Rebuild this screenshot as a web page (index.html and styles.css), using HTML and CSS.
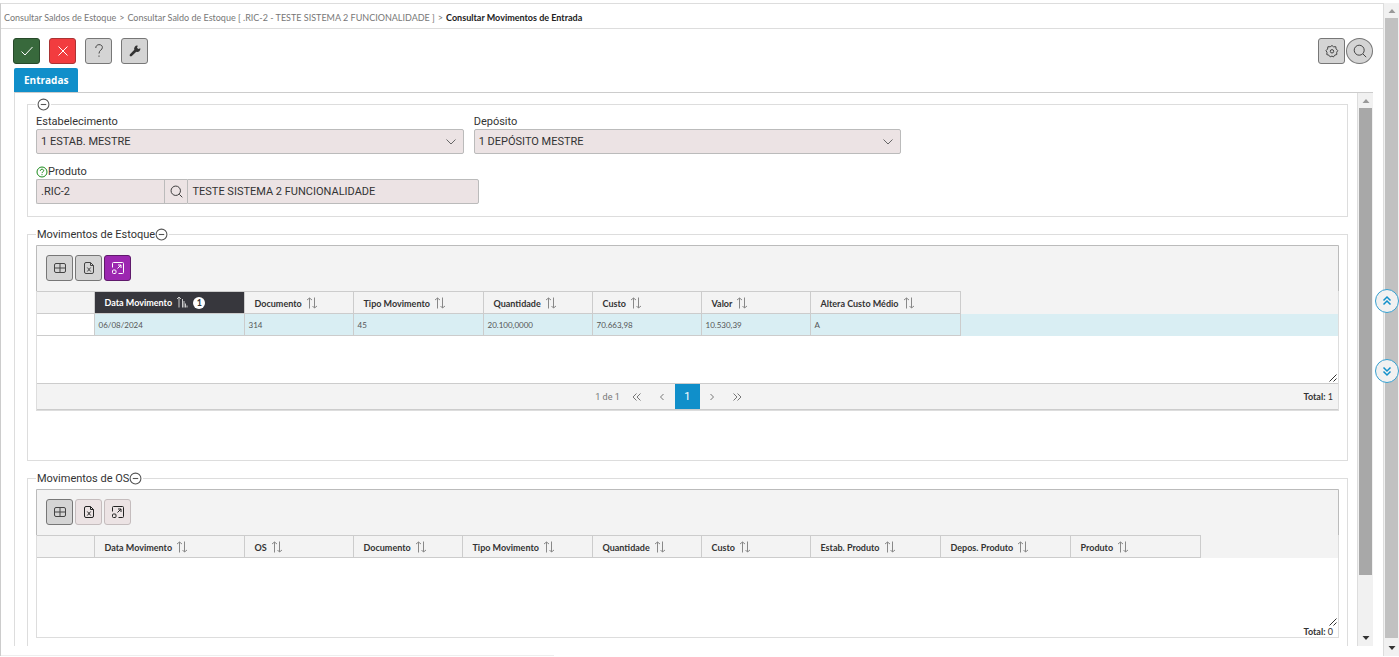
FILE: index.html
```html
<!DOCTYPE html>
<html lang="pt-BR">
<head>
    <meta charset="UTF-8">
    <meta name="viewport" content="width=device-width, initial-scale=1.0">
    <title>Consultar Movimentos de Entrada</title>
    <link rel="stylesheet" href="styles.css">
</head>
<body>
    <svg class="sprite" aria-hidden="true">
        <symbol id="minus" viewBox="0 0 12 12"><circle cx="6" cy="6" r="5"/><path d="M3.5 6h5"/></symbol>
        <symbol id="help-circle" viewBox="0 0 12 12"><circle cx="6" cy="6" r="5"/><path d="M4.3 4.8c0-2.2 3.4-2.1 3.4-.1C7.700 5.800 6 5.900 6 7.100M6 8.200v1"/></symbol>
        <symbol id="check" viewBox="0 0 16 16"><path d="M2.500 8.500l3.500 3.500 7.500-8"/></symbol>
        <symbol id="close" viewBox="0 0 16 16"><path d="M3.500 3.500l9 9M12.500 3.500l-9 9"/></symbol>
        <symbol id="question" viewBox="0 0 16 16"><path d="M4.800 5c0-4.600 6.600-4.200 6.600-.6C11.400 7 8 7.200 8 10.500M8 12.500v1.300"/></symbol>
        <symbol id="wrench" viewBox="0 0 16 16"><path d="M13.300 5.200l-2 .8-1.300-1.300.8-2a3 3 0 0 0-3.500 4L3 11.200a1.200 1.200 0 0 0 1.800 1.800l4.500-4.300a3 3 0 0 0 4-3.500z"/></symbol>
        <symbol id="gear" viewBox="0 0 16 16"><path d="M8 2.500l1.500 1.300 2.300-.1.300 2.200 1.600 1.600-1 1.900.1 2.100-2.100.7L9.400 14 8 13l-1.800.9-1.300-1.700-2.100-.6.200-2.200-1-1.800 1.600-1.600.3-2.300 2.300.1z"/><circle cx="8" cy="8.300" r="1.700"/></symbol>
        <symbol id="search" viewBox="0 0 16 16"><circle cx="7.200" cy="7.200" r="5"/><path d="M11 11l3.200 3.200"/></symbol>
        <symbol id="chevron" viewBox="0 0 12 12"><path d="M1.500 3.500L6 8l4.500-4.500"/></symbol>
        <symbol id="grid" viewBox="0 0 16 16"><rect x="2.500" y="3.500" width="11" height="9" rx="1.500"/><path d="M8 3.500v9M2.500 8h11"/></symbol>
        <symbol id="excel" viewBox="0 0 16 16"><path d="M9.500 2.500H5A1.500 1.500 0 0 0 3.500 4v8A1.500 1.500 0 0 0 5 13.500h6a1.500 1.500 0 0 0 1.500-1.500V5.500zM9.500 2.500v3h3M6.300 7.500l3.400 4M9.700 7.500l-3.400 4"/></symbol>
        <symbol id="expand" viewBox="0 0 16 16"><path d="M2.500 7.500v-4a1 1 0 0 1 1-1h9a1 1 0 0 1 1 1v9a1 1 0 0 1-1 1h-4M7.500 8.500l3.500-3.500M8 5h3v3"/><rect x="2.500" y="10" width="3.500" height="3.500" rx="1"/></symbol>
        <symbol id="sort" viewBox="0 0 12 12"><path d="M3.500 11.500V1M1 3l2.500-2L6 3M8.500.5V11M6.500 9l2 2 2.500-2"/></symbol>
        <symbol id="sorted" viewBox="0 0 12 12"><path d="M3 11.500V1M1 3l2-2 2 2M6.500 3v8.500M8 5v6.500M9.500 7.500v4M11 9.500v2"/></symbol>
        <symbol id="double" viewBox="0 0 12 12"><path d="M5.500 2.500L2 6l3.500 3.500M9.500 2.500L6 6l3.500 3.500"/></symbol>
        <symbol id="single" viewBox="0 0 12 12"><path d="M7.500 3L4.500 6l3 3"/></symbol>
        <symbol id="triangle" viewBox="0 0 12 12"><path d="M2.500 8L6 4l3.500 4z"/></symbol>
        <symbol id="grip" viewBox="0 0 10 10"><path d="M1.500 8.500l7-7M5.500 8.500l3-3"/></symbol>
    </svg>

    <div class="page">
        <header class="breadcrumb">
            <a href="#">Consultar Saldos de Estoque</a>
            <span>&gt;</span>
            <a href="#">Consultar Saldo de Estoque [ .RIC-2 - TESTE SISTEMA 2 FUNCIONALIDADE ]</a>
            <span>&gt;</span>
            <strong>Consultar Movimentos de Entrada</strong>
        </header>

        <main>
            <div class="actions">
                <button type="button" class="btn confirm" aria-label="Confirmar"><svg><use href="#check"/></svg></button>
                <button type="button" class="btn cancel" aria-label="Cancelar"><svg><use href="#close"/></svg></button>
                <button type="button" class="btn" aria-label="Ajuda"><svg><use href="#question"/></svg></button>
                <button type="button" class="btn solid" aria-label="Ferramentas"><svg><use href="#wrench"/></svg></button>
                <div class="actions-right">
                    <button type="button" class="btn" aria-label="Configurar"><svg><use href="#gear"/></svg></button>
                    <button type="button" class="btn round" aria-label="Pesquisar"><svg><use href="#search"/></svg></button>
                </div>
            </div>

            <nav class="tabs">
                <button type="button" class="tab">Entradas</button>
            </nav>

            <div class="panel">
                <div class="panel-content">
                    <fieldset class="filters">
                        <legend><button type="button" class="toggle" aria-label="Recolher filtros"><svg><use href="#minus"/></svg></button></legend>
                        <div class="form-row">
                            <div class="field">
                                <label for="estabelecimento">Estabelecimento</label>
                                <div class="select-box">
                                    <select id="estabelecimento"><option>1 ESTAB. MESTRE</option></select>
                                    <svg><use href="#chevron"/></svg>
                                </div>
                            </div>
                            <div class="field">
                                <label for="deposito">Depósito</label>
                                <div class="select-box">
                                    <select id="deposito"><option>1 DEPÓSITO MESTRE</option></select>
                                    <svg><use href="#chevron"/></svg>
                                </div>
                            </div>
                        </div>
                        <div class="field">
                            <label for="produto"><svg class="help"><use href="#help-circle"/></svg>Produto</label>
                            <div class="lookup">
                                <input type="text" id="produto" class="code" value=".RIC-2" readonly>
                                <button type="button" class="lookup-btn" aria-label="Buscar produto"><svg><use href="#search"/></svg></button>
                                <input type="text" class="description" aria-label="Descrição do produto" value="TESTE SISTEMA 2 FUNCIONALIDADE" readonly>
                            </div>
                        </div>
                    </fieldset>

                    <fieldset class="stock">
                        <legend>Movimentos de Estoque<button type="button" class="toggle" aria-label="Recolher movimentos de estoque"><svg><use href="#minus"/></svg></button></legend>
                        <div class="grid-box">
                            <div class="grid-toolbar">
                                <button type="button" class="btn" aria-label="Colunas"><svg><use href="#grid"/></svg></button>
                                <button type="button" class="btn" aria-label="Exportar para Excel"><svg><use href="#excel"/></svg></button>
                                <button type="button" class="btn purple" aria-label="Expandir"><svg><use href="#expand"/></svg></button>
                            </div>
                            <div class="grid-body">
                                <table>
                                    <colgroup>
                                        <col class="w-select"><col class="w-large"><col class="w-small"><col class="w-medium"><col class="w-small"><col class="w-small"><col class="w-small"><col class="w-large"><col>
                                    </colgroup>
                                    <thead>
                                        <tr>
                                            <th></th>
                                            <th class="sorted">Data Movimento <svg><use href="#sorted"/></svg><span class="order">1</span></th>
                                            <th>Documento <svg><use href="#sort"/></svg></th>
                                            <th>Tipo Movimento <svg><use href="#sort"/></svg></th>
                                            <th>Quantidade <svg><use href="#sort"/></svg></th>
                                            <th>Custo <svg><use href="#sort"/></svg></th>
                                            <th>Valor <svg><use href="#sort"/></svg></th>
                                            <th>Altera Custo Médio <svg><use href="#sort"/></svg></th>
                                            <th class="filler"></th>
                                        </tr>
                                    </thead>
                                    <tbody>
                                        <tr>
                                            <td class="select-cell"></td>
                                            <td>06/08/2024</td>
                                            <td>314</td>
                                            <td>45</td>
                                            <td>20.100,0000</td>
                                            <td>70.663,98</td>
                                            <td>10.530,39</td>
                                            <td>A</td>
                                            <td class="filler"></td>
                                        </tr>
                                    </tbody>
                                </table>
                                <svg class="grip"><use href="#grip"/></svg>
                            </div>
                            <div class="pager">
                                <div class="pages">
                                    <span>1 de 1</span>
                                    <button type="button" aria-label="Primeira página"><svg><use href="#double"/></svg></button>
                                    <button type="button" aria-label="Página anterior"><svg><use href="#single"/></svg></button>
                                    <button type="button" class="current">1</button>
                                    <button type="button" class="next" aria-label="Próxima página"><svg><use href="#single"/></svg></button>
                                    <button type="button" class="next" aria-label="Última página"><svg><use href="#double"/></svg></button>
                                </div>
                                <div class="total"><strong>Total:</strong> 1</div>
                            </div>
                        </div>
                    </fieldset>

                    <fieldset class="orders">
                        <legend>Movimentos de OS<button type="button" class="toggle" aria-label="Recolher movimentos de OS"><svg><use href="#minus"/></svg></button></legend>
                        <div class="grid-box">
                            <div class="grid-toolbar">
                                <button type="button" class="btn" aria-label="Colunas"><svg><use href="#grid"/></svg></button>
                                <button type="button" class="btn pale" aria-label="Exportar para Excel"><svg><use href="#excel"/></svg></button>
                                <button type="button" class="btn pale" aria-label="Expandir"><svg><use href="#expand"/></svg></button>
                            </div>
                            <div class="grid-body">
                                <table>
                                    <colgroup>
                                        <col class="w-select"><col class="w-large"><col class="w-small"><col class="w-small"><col class="w-medium"><col class="w-small"><col class="w-small"><col class="w-medium"><col class="w-medium"><col class="w-medium"><col>
                                    </colgroup>
                                    <thead>
                                        <tr>
                                            <th></th>
                                            <th>Data Movimento <svg><use href="#sort"/></svg></th>
                                            <th>OS <svg><use href="#sort"/></svg></th>
                                            <th>Documento <svg><use href="#sort"/></svg></th>
                                            <th>Tipo Movimento <svg><use href="#sort"/></svg></th>
                                            <th>Quantidade <svg><use href="#sort"/></svg></th>
                                            <th>Custo <svg><use href="#sort"/></svg></th>
                                            <th>Estab. Produto <svg><use href="#sort"/></svg></th>
                                            <th>Depos. Produto <svg><use href="#sort"/></svg></th>
                                            <th>Produto <svg><use href="#sort"/></svg></th>
                                            <th class="filler"></th>
                                        </tr>
                                    </thead>
                                </table>
                                <svg class="grip"><use href="#grip"/></svg>
                            </div>
                            <div class="total"><strong>Total:</strong> 0</div>
                        </div>
                    </fieldset>
                </div>
                <div class="scrollbar inner">
                    <svg><use href="#triangle"/></svg>
                    <div class="thumb"></div>
                    <svg class="down"><use href="#triangle"/></svg>
                </div>
            </div>
        </main>
        <div class="status"></div>
    </div>

    <div class="scrollbar">
        <svg><use href="#triangle"/></svg>
        <div class="thumb"></div>
        <svg class="down"><use href="#triangle"/></svg>
    </div>

    <div class="jump">
        <button type="button" aria-label="Ir para o topo"><svg><use href="#double"/></svg></button>
        <button type="button" class="bottom" aria-label="Ir para o final"><svg><use href="#double"/></svg></button>
    </div>
</body>
</html>
```
FILE: styles.css
```css
* {
    box-sizing: border-box;
}
body {
    margin: 0;
    padding: 3px 0 1px;
    height: 100vh;
    display: flex;
    overflow: hidden;
    font-family: Roboto, sans-serif;
    font-size: 11px;
    color: #333;
    background: white;
}
button, input, select {
    margin: 0;
    font-family: inherit;
    font-size: inherit;
    color: inherit;
}
svg {
    width: 12px;
    height: 12px;
    flex: none;
    fill: none;
    stroke: currentColor;
}
.sprite {
    position: absolute;
    width: 0;
    height: 0;
}
.page {
    flex: 1;
    min-width: 0;
    display: flex;
    flex-direction: column;
    border-top: 1px solid #ddd;
    border-left: 1px solid #ccc;
}
.breadcrumb {
    display: flex;
    align-items: center;
    gap: 3px;
    height: 25px;
    padding: 2px 3px 0;
    border-bottom: 1px solid #ddd;
    font-family: Lato, sans-serif;
    font-size: 9px;
    color: #777;
}
.breadcrumb a {
    color: inherit;
    text-decoration: none;
}
.breadcrumb strong {
    color: #222;
}
main {
    flex: 1;
    min-height: 0;
    display: flex;
    flex-direction: column;
    padding: 9px 10px 0 12px;
}

/* buttons */
.actions {
    display: flex;
    gap: 9px;
}
.actions-right {
    display: flex;
    gap: 1px;
    margin-left: auto;
}
.btn {
    display: flex;
    align-items: center;
    justify-content: center;
    width: 27px;
    height: 26px;
    padding: 0;
    border: 1px solid #777;
    border-radius: 3px;
    background: #d4d4d4;
    color: #444;
}
.btn svg {
    width: 16px;
    height: 16px;
}
.confirm {
    background: #38693c;
    border-color: #27492a;
    color: white;
}
.cancel {
    background: #f23c3f;
    border-color: #a33;
    color: white;
}
.solid svg {
    fill: #333;
    stroke: none;
}
.round {
    border-radius: 50%;
}
.purple {
    background: #9c27b0;
    border-color: #5f1a6b;
    color: white;
}
.pale {
    background: #ece3e4;
    border-color: #c4bcbd;
    color: #222;
}
.tabs {
    display: flex;
    padding: 4px 1px 0;
}
.tab {
    height: 24px;
    padding: 0 10px;
    border: 0;
    border-radius: 2px 2px 0 0;
    background: #108fca;
    color: white;
    font-family: "Open Sans", sans-serif;
    font-size: 10px;
    font-weight: bold;
}

/* scrolling panel */
.panel {
    flex: 1;
    min-height: 0;
    display: flex;
    margin: 0 0 9px 1px;
    border-top: 1px solid #ccc;
    border-left: 1px solid #ddd;
}
.panel-content {
    flex: 1;
    min-width: 0;
    overflow: hidden;
    padding: 4px 9px 0 12px;
}
fieldset {
    min-width: 0;
    margin: 0 0 9px;
    padding: 3px 8px 12px;
    border: 1px solid #ddd;
}
.stock {
    padding-bottom: 49px;
}
legend {
    display: flex;
    align-items: center;
    height: 16px;
    padding: 0 1px;
    font-size: 11px;
}
.filters legend {
    height: 14px;
}
.toggle {
    display: flex;
    padding: 0;
    border: 0;
    background: none;
    color: #555;
}
.toggle svg {
    width: 13px;
    height: 13px;
}
.form-row {
    display: grid;
    grid-template-columns: repeat(3, 1fr);
    gap: 10px;
    margin-bottom: 10px;
}
.field label {
    display: flex;
    align-items: center;
    height: 15px;
}
.help {
    color: #1a8a1a;
}
.select-box {
    display: grid;
    align-items: center;
}
.select-box select, .select-box svg {
    grid-area: 1 / 1;
}
.select-box svg {
    justify-self: end;
    margin-right: 7px;
    color: #666;
    pointer-events: none;
}
select, input {
    width: 100%;
    height: 25px;
    padding: 0 4px;
    appearance: none;
    border: 1px solid #bbb;
    border-radius: 2px;
    background: #ece3e4;
}
.lookup {
    display: flex;
    width: 34%;
}
.code {
    width: 29%;
    border-right: 0;
    border-radius: 2px 0 0 2px;
}
.description {
    flex: 1;
    min-width: 0;
    border-radius: 0 2px 2px 0;
}
.lookup-btn {
    display: flex;
    align-items: center;
    justify-content: center;
    width: 23px;
    height: 25px;
    padding: 0;
    border: 1px solid #bbb;
    border-right: 0;
    background: #ece3e4;
}
.lookup-btn svg {
    width: 15px;
    height: 15px;
}

/* grids */
.grid-box {
    border: 1px solid #ddd;
    border-top-color: #bbb;
}
.grid-toolbar {
    display: flex;
    gap: 2px;
    height: 45px;
    padding: 9px;
    background: #f3f3f3;
    box-shadow: 1px 0 #bbb, -1px 0 #bbb;
}
.grid-body {
    display: flex;
    flex-direction: column;
    justify-content: space-between;
    height: 92px;
}
table {
    width: 100%;
    table-layout: fixed;
    border-collapse: collapse;
    font-family: Lato, sans-serif;
    font-size: 9px;
}
thead {
    background: #f3f3f3;
}
.w-select {
    width: 57px;
}
.w-small {
    width: 109px;
}
.w-medium {
    width: 130px;
}
.w-large {
    width: 150px;
}
th, td {
    height: 22px;
    border: 1px solid #ccc;
    text-align: left;
    white-space: nowrap;
}
th:first-child, td:first-child {
    border-left: 0;
}
th {
    padding: 0 0 0 10px;
    color: #333;
}
th svg {
    margin-left: 2px;
    vertical-align: text-bottom;
    color: #888;
}
.sorted {
    background: #37373d;
    color: white;
}
.sorted svg {
    color: #ccc;
}
.order {
    display: inline-block;
    width: 12px;
    margin-left: 5px;
    border-radius: 6px;
    background: white;
    color: #333;
    line-height: 12px;
    text-align: center;
}
td {
    padding: 0 4px;
    background: #d9eef3;
    color: #555;
    font-size: 8px;
}
.select-cell {
    background: white;
}
th.filler {
    border-width: 0 0 0 1px;
    border-top: 1px solid #f3f3f3;
}
td.filler {
    border-width: 0 0 0 1px;
}
.grip {
    align-self: flex-end;
    width: 10px;
    height: 10px;
    color: #333;
}
.pager {
    display: grid;
    grid-template-columns: 1fr auto 1fr;
    align-items: center;
    border: 1px solid #ccc;
    border-width: 1px 0;
    background: #f3f3f3;
}
.pages {
    grid-column: 2;
    display: flex;
    align-items: center;
    padding-right: 30px;
    font-size: 9px;
    color: #777;
}
.pages span {
    padding-right: 5px;
}
.pages button {
    display: flex;
    align-items: center;
    justify-content: center;
    width: 25px;
    height: 25px;
    padding: 0;
    border: 0;
    background: none;
}
.pages .current {
    background: #108fca;
    color: white;
    font-size: 11px;
}
.next svg {
    transform: rotate(180deg);
}
.total {
    padding: 0 5px;
    font-family: Lato, sans-serif;
    font-size: 9px;
    line-height: 10px;
    text-align: right;
}

/* scrollbars */
.scrollbar {
    display: flex;
    flex-direction: column;
    align-items: center;
    width: 16px;
    padding: 2px 0;
    border-left: 1px solid #ddd;
    background: #f1f1f1;
}
.scrollbar svg {
    fill: #999;
    stroke: none;
}
.scrollbar .down {
    margin-top: auto;
    transform: rotate(180deg);
    fill: #333;
}
.thumb {
    flex: 1;
    width: 13px;
    margin: 1px 0 4px;
    background: #c1c1c1;
}
.inner .thumb {
    flex: 0 0 85%;
    background: #a8a8a8;
}
.jump {
    position: absolute;
    top: 289px;
    right: 0;
    display: grid;
    gap: 46px;
}
.jump button {
    display: flex;
    align-items: center;
    justify-content: center;
    width: 24px;
    height: 24px;
    padding: 0;
    border: 1px solid #35a0d0;
    border-radius: 50%;
    background: #f1f1f1;
    color: #108fca;
}
.jump svg {
    stroke-width: 1.5;
    transform: rotate(90deg);
}
.jump .bottom svg {
    transform: rotate(270deg);
}
.status {
    width: 40%;
    border-bottom: 1px solid #eee;
}
```
